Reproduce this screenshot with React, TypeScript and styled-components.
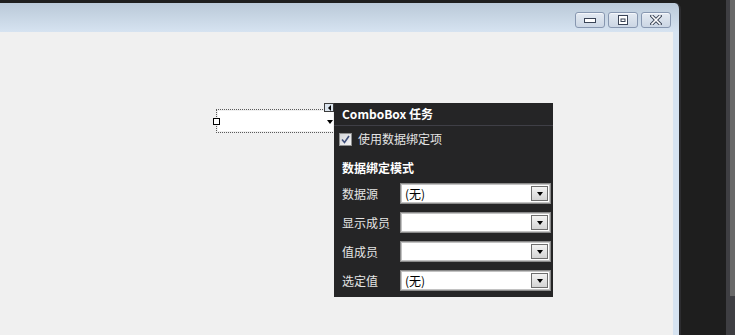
import styled, { createGlobalStyle } from "styled-components";

const GlobalStyle = createGlobalStyle`
  html, body {
    margin: 0;
    padding: 0;
    background: #1e1e1e;
  }
  body {
    font-family: "Noto Sans CJK SC", "Noto Sans", sans-serif;
    font-size: 12px;
  }
  #root {
    width: 735px;
    height: 335px;
    overflow: hidden;
  }
`;

const Screen = styled.div`
  display: flex;
  width: 735px;
  height: 335px;
  background: #1e1e1e;
`;

const Window = styled.div`
  width: 679px;
  margin-top: 3px;
  display: flex;
  flex-direction: column;
  border-top-right-radius: 6px;
  border-right: 2px solid #2d2d30;
  background: linear-gradient(to bottom, #bac9d8 0px, #d6e3f1 29px);
`;

const TitleBar = styled.div`
  height: 29px;
  flex-shrink: 0;
  display: flex;
  justify-content: flex-end;
  align-items: flex-start;
  gap: 3px;
  padding: 9px 8px 0 0;
  box-sizing: border-box;
`;

const CaptionButton = styled.div`
  width: 30px;
  height: 16px;
  box-sizing: border-box;
  border: 1px solid #8797b0;
  border-radius: 3px;
  background: linear-gradient(to bottom, #e4eaf2, #cbd6e4);
  box-shadow: inset 0 1px 0 #f4f7fb;
  display: flex;
  align-items: center;
  justify-content: center;
`;

const Frame = styled.div`
  flex: 1;
  display: flex;
  padding-right: 6px;
  background: #d6e3f1;
`;

const Client = styled.div`
  flex: 1;
  position: relative;
  background: #f0f0f0;
`;

const Selection = styled.div`
  position: absolute;
  left: 216px;
  top: 77px;
  width: 119px;
  height: 24px;
  box-sizing: border-box;
  border: 1px dotted #5a5a5a;
  padding: 1px;
`;

const DesignCombo = styled.div`
  height: 100%;
  background: #ffffff;
  position: relative;
`;

const DesignArrow = styled.div`
  position: absolute;
  right: 0;
  top: 9px;
  width: 0;
  height: 0;
  border-left: 3.5px solid transparent;
  border-right: 3.5px solid transparent;
  border-top: 4px solid #000;
`;

const Handle = styled.div`
  position: absolute;
  left: -4px;
  top: 8px;
  width: 7px;
  height: 7px;
  box-sizing: border-box;
  border: 1px solid #000;
  background: #fff;
`;

const SmartTag = styled.div`
  position: absolute;
  left: 324px;
  top: 71px;
  width: 10px;
  height: 9px;
  box-sizing: border-box;
  border: 1px solid #3c3c3c;
  background: #dbe4ee;
  display: flex;
  align-items: center;
  justify-content: center;

  &::after {
    content: "";
    width: 0;
    height: 0;
    border-top: 3px solid transparent;
    border-bottom: 3px solid transparent;
    border-right: 3px solid #000;
  }
`;

const Panel = styled.div`
  position: absolute;
  left: 334px;
  top: 71px;
  width: 219px;
  height: 194px;
  box-sizing: border-box;
  background: #252526;
  display: flex;
  flex-direction: column;
`;

const PanelHeader = styled.div`
  height: 22px;
  flex-shrink: 0;
  display: flex;
  align-items: center;
  padding-left: 8px;
  border-bottom: 1px solid #3f3f46;
  color: #ffffff;
  font-weight: 700;
  font-size: 12px;
  line-height: 1;
`;

const PanelBody = styled.div`
  display: flex;
  flex-direction: column;
  padding: 0 2px 0 8px;
`;

const CheckRow = styled.label`
  height: 26px;
  display: flex;
  align-items: center;
  gap: 6px;
  margin-left: -3px;
  color: #e4e4e4;
  font-size: 12px;
  line-height: 1;
`;

const CheckBox = styled.span`
  width: 13px;
  height: 13px;
  box-sizing: border-box;
  border: 1px solid #8e8f8f;
  background: linear-gradient(135deg, #d4d6da, #f4f4f4);
  display: flex;
  align-items: center;
  justify-content: center;
`;

const SectionTitle = styled.div`
  height: 31px;
  display: flex;
  align-items: center;
  color: #ffffff;
  font-weight: 700;
  font-size: 12px;
  line-height: 1;
`;

const Fields = styled.div`
  display: flex;
  flex-direction: column;
  gap: 8px;
`;

const FieldRow = styled.div`
  display: grid;
  grid-template-columns: 58px 151px;
  align-items: center;
  height: 21px;
`;

const FieldLabel = styled.span`
  color: #e4e4e4;
  font-size: 12px;
  line-height: 1;
`;

const Combo = styled.div`
  height: 21px;
  box-sizing: border-box;
  border: 1px solid #8a8a8a;
  box-shadow: inset 0 0 0 1px #c2c2c2;
  background: #ffffff;
  display: flex;
  align-items: center;
  justify-content: space-between;
  padding: 2px;
`;

const ComboText = styled.span`
  padding-left: 2px;
  color: #000;
  font-size: 12px;
  line-height: 1;
`;

const ComboButton = styled.span`
  width: 17px;
  height: 15px;
  box-sizing: border-box;
  border: 1px solid #6e6e6e;
  background: linear-gradient(to bottom, #f3f3f3, #d4d4d4);
  display: flex;
  align-items: center;
  justify-content: center;

  &::after {
    content: "";
    width: 0;
    height: 0;
    margin-top: 1px;
    border-left: 3.5px solid transparent;
    border-right: 3.5px solid transparent;
    border-top: 4px solid #000;
  }
`;

const Gutter = styled.div`
  flex: 1;
`;

const ScrollTrack = styled.div`
  width: 9px;
  display: flex;
  background: #3e3e42;
  padding-left: 4px;
  box-sizing: border-box;
`;

const ScrollThumb = styled.div`
  width: 5px;
  height: 296px;
  background: #686868;
`;

const fields = [
  { label: "数据源", value: "(无)" },
  { label: "显示成员", value: "" },
  { label: "值成员", value: "" },
  { label: "选定值", value: "(无)" },
];

export default function App() {
  return (
    <>
      <GlobalStyle />
      <Screen>
        <Window>
          <TitleBar>
            <CaptionButton>
              <svg width="14" height="8" viewBox="0 0 14 8">
                <rect x="1.5" y="2.5" width="11" height="4" fill="#fff" stroke="#3a4456" />
              </svg>
            </CaptionButton>
            <CaptionButton>
              <svg width="12" height="10" viewBox="0 0 12 10">
                <rect x="1.5" y="0.5" width="9" height="9" fill="#fff" stroke="#3a4456" />
                <rect x="4" y="4" width="4" height="2.5" fill="#fff" stroke="#3a4456" />
              </svg>
            </CaptionButton>
            <CaptionButton>
              <svg width="12" height="10" viewBox="0 0 12 10">
                <path d="M2 1 L10 9 M10 1 L2 9" stroke="#3a4456" strokeWidth="3.4" strokeLinecap="square" />
                <path d="M2 1 L10 9 M10 1 L2 9" stroke="#fff" strokeWidth="1.6" strokeLinecap="square" />
              </svg>
            </CaptionButton>
          </TitleBar>
          <Frame>
            <Client>
              <Selection>
                <DesignCombo>
                  <DesignArrow />
                </DesignCombo>
                <Handle />
              </Selection>
              <SmartTag />
              <Panel>
                <PanelHeader>ComboBox 任务</PanelHeader>
                <PanelBody>
                  <CheckRow>
                    <CheckBox>
                      <svg width="9" height="9" viewBox="0 0 9 9">
                        <path d="M1 4.5 L3.5 7.5 L8 1" fill="none" stroke="#3f4f7a" strokeWidth="1.6" />
                      </svg>
                    </CheckBox>
                    使用数据绑定项
                  </CheckRow>
                  <SectionTitle>数据绑定模式</SectionTitle>
                  <Fields>
                    {fields.map((f) => (
                      <FieldRow key={f.label}>
                        <FieldLabel>{f.label}</FieldLabel>
                        <Combo>
                          <ComboText>{f.value}</ComboText>
                          <ComboButton />
                        </Combo>
                      </FieldRow>
                    ))}
                  </Fields>
                </PanelBody>
              </Panel>
            </Client>
          </Frame>
        </Window>
        <Gutter />
        <ScrollTrack>
          <ScrollThumb />
        </ScrollTrack>
      </Screen>
    </>
  );
}
